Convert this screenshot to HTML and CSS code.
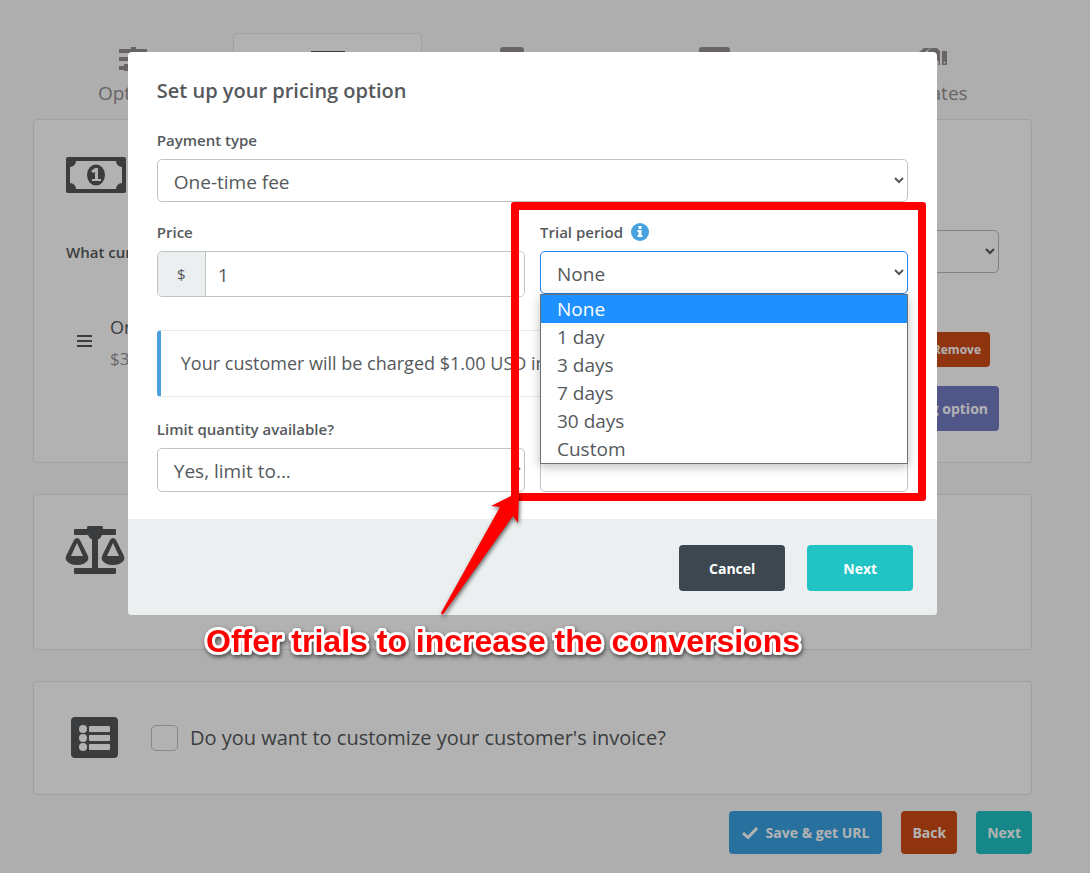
FILE: index.html
```html
<!DOCTYPE html>
<html lang="en">
<head>
  <meta charset="UTF-8" />
  <title>Pricing</title>
  <link rel="stylesheet" href="styles.css">
</head>
<body>
  <div class="page">
    <nav class="tabs">
      <a class="tab" href="#options">
        <svg width="28" height="24" viewBox="0 0 28 24"><path d="M0 2h12V0h5v2h11v4H17v2h-5V6H0zM0 10h17V8h5v2h6v4h-6v2h-5v-2H0zM0 19h5v-2h5v2h18v4H10v1H5v-1H0z" /></svg>
        <span>Options</span>
      </a>
      <a class="tab active" href="#pricing">
        <svg width="34" height="24" viewBox="0 0 34 24"><path d="M0 4h34v17H0z" /></svg>
        <span>Pricing</span>
      </a>
      <a class="tab" href="#fields">
        <svg width="24" height="24" viewBox="0 0 24 24"><rect width="24" height="24" rx="3" /></svg>
        <span>Fields</span>
      </a>
      <a class="tab" href="#emails">
        <svg width="31" height="24" viewBox="0 0 31 24"><rect width="31" height="24" rx="3" /></svg>
        <span>Messages</span>
      </a>
      <a class="tab" href="#affiliates">
        <svg width="34" height="24" viewBox="0 0 34 24"><path d="M0 5h5v13H0zM6 5l5-4h6l-5 4v4c2 2 5 1 6-2l6 8v2c-3 3-7 4-10 2l-8-4zM16 2l3-1h5l3 3v14h-2l1-3-7-8-3 2-2-2z" /><path d="M29 4h5v14h-5zm2.500 10.500a1 1 0 1 0 .1 2 1 1 0 0 0-.1-2z" fill-rule="evenodd" /></svg>
        <span>Affiliates</span>
      </a>
    </nav>

    <section class="card pricing-card">
      <svg class="card-icon" width="60" height="36" viewBox="0 0 60 36">
        <path fill-rule="evenodd" d="M2 0h56a2 2 0 0 1 2 2v32a2 2 0 0 1-2 2H2a2 2 0 0 1-2-2V2a2 2 0 0 1 2-2zM10 4a6 6 0 0 1-6 6v16a6 6 0 0 1 6 6h40a6 6 0 0 1 6-6V10a6 6 0 0 1-6-6z" />
        <ellipse cx="30" cy="18" rx="9" ry="10.500" />
        <path class="cut" d="M29 11h3v11h3v2h-9v-2h3v-7l-2 1-2-2z" />
      </svg>
      <div class="currency-row">
        <label for="currency">What currency do you want to use?</label>
        <select id="currency"><option>US Dollar</option></select>
      </div>
      <div class="option-row">
        <svg width="15" height="13" viewBox="0 0 15 13"><path d="M0 0h15v2H0zM0 5h15v2H0zM0 10h15v2H0z" /></svg>
        <div class="option-text">
          <div class="option-name">One-time fee</div>
          <div class="option-price">$3.00</div>
        </div>
        <button class="btn btn-red btn-small">Remove</button>
      </div>
      <button class="btn btn-purple">Add pricing option</button>
    </section>

    <section class="card terms-card">
      <svg class="card-icon" width="60" height="48" viewBox="0 0 60 48">
        <path d="M10 3h12a7 7 0 0 1 16 0h12a1 1 0 0 1 1 1v4a1 1 0 0 1-1 1H37q-1 3-4 4.500V42h17a1 1 0 0 1 1 1v4a1 1 0 0 1-1 1H10a1 1 0 0 1-1-1v-4a1 1 0 0 1 1-1h17V13.500Q24 12 23 9H10a1 1 0 0 1-1-1V4a1 1 0 0 1 1-1z" />
        <path fill-rule="evenodd" d="M9 14q3-4 6 0l7.500 15q1.500 3 .5 5-3 5-11 5T1 34q-1-2 .5-5zM12 17L6 30h12zM45 14q3-4 6 0l7.500 15q1.500 3 .5 5-3 5-11 5t-11-5q-1-2 .5-5zM48 17l-6 13h12z" />
      </svg>
    </section>

    <section class="card invoice-card">
      <svg class="card-icon" width="60" height="42" viewBox="0 0 60 42">
        <rect x="6" width="47" height="41" rx="4" />
        <g class="cut">
          <circle cx="18" cy="12" r="4" /><circle cx="18" cy="21" r="4" /><circle cx="18" cy="30" r="4" />
          <rect x="24" y="9" width="21" height="6" rx="1" /><rect x="24" y="18" width="21" height="6" rx="1" /><rect x="24" y="27" width="21" height="6" rx="1" />
        </g>
      </svg>
      <label class="invoice-check"><input type="checkbox" /> Do you want to customize your customer's invoice?</label>
    </section>

    <div class="page-actions">
      <button class="btn btn-blue">
        <svg width="16" height="12" viewBox="0 0 16 12"><path d="M1 6l5 4.500L15 1" fill="none" stroke="currentColor" stroke-width="3" /></svg>
        Save &amp; get URL
      </button>
      <button class="btn btn-red">Back</button>
      <button class="btn btn-teal">Next</button>
    </div>
  </div>

  <div class="overlay">
    <div class="modal" role="dialog" aria-labelledby="modal-title">
      <form class="modal-body">
        <h2 id="modal-title">Set up your pricing option</h2>
        <div class="field">
          <label for="type">Payment type</label>
          <select id="type"><option>One-time fee</option></select>
        </div>
        <div class="field-row">
          <div class="field">
            <label for="price">Price</label>
            <div class="input-group">
              <span class="addon">$</span>
              <input id="price" type="text" value="1" />
            </div>
          </div>
          <div class="field trial-field">
            <label for="trial">Trial period
              <svg width="18" height="18" viewBox="0 0 18 18"><circle cx="9" cy="9" r="9" fill="#46a1e0" /><path fill="#fff" d="M7.500 3h3v3h-3zM6.500 7h4v5h1v2h-5v-2h1V9h-1z" /></svg>
            </label>
            <div class="trial-select">
              <select id="trial" class="focused"><option>None</option></select>
              <ul class="trial-list">
                <li class="selected">None</li>
                <li>1 day</li>
                <li>3 days</li>
                <li>7 days</li>
                <li>30 days</li>
                <li>Custom</li>
              </ul>
            </div>
            <div class="highlight"></div>
          </div>
        </div>
        <p class="message">Your customer will be charged $1.00 USD immediately.</p>
        <div class="field-row limit-row">
          <div class="field">
            <label for="limit">Limit quantity available?</label>
            <select id="limit"><option>Yes, limit to...</option></select>
          </div>
          <div class="field">
            <input type="text" aria-label="Quantity" />
          </div>
        </div>
      </form>
      <div class="modal-footer">
        <button class="btn btn-dark">Cancel</button>
        <button class="btn btn-teal">Next</button>
      </div>
      <svg class="callout" width="640" height="180" viewBox="0 0 640 180">
        <path class="arrow" d="M329 4L301 18l9 1L251 125q1 3 3 0L323 28l5 7z" />
        <text x="16" y="164">Offer trials to increase the conversions</text>
      </svg>
    </div>
  </div>
</body>
</html>
```

FILE: styles.css
```css
* {
  box-sizing: border-box;
}
body {
  margin: 0;
  background: #f9f9f9;
  color: #55595c;
  font-family: "Open Sans", "Noto Sans", sans-serif;
  font-size: 18px;
}
button, input, select {
  font-family: inherit;
  color: inherit;
}
label {
  display: block;
  font-size: 15px;
  font-weight: 600;
  line-height: 22px;
}
select, input {
  display: block;
  width: 100%;
  height: 43px;
  padding: 2px 3px 0 12px;
  border: 1px solid #c1c4c5;
  border-radius: 5px;
  background: #fff;
  font-size: 19px;
}

/* page */
.page {
  padding: 33px 58px 19px 33px;
}
.tabs {
  display: grid;
  grid-template-columns: 200fr 189fr 180fr 225fr 205fr;
}
.tab {
  display: flex;
  flex-direction: column;
  align-items: center;
  gap: 9px;
  height: 86px;
  padding-top: 13px;
  border: 1px solid transparent;
  color: #979090;
  font-size: 19px;
  line-height: 26px;
  text-decoration: none;
}
.tab svg {
  fill: currentColor;
}
.tab.active {
  border-color: #e6e6e6;
  border-bottom: 0;
  border-radius: 5px 5px 0 0;
  background: #fff;
  color: #556;
}
.card {
  margin-bottom: 31px;
  padding: 31px;
  border: 1px solid #e6e6e6;
  border-radius: 4px;
  background: #fff;
}
.card-icon {
  display: block;
  flex: none;
  fill: #55565a;
}
.card-icon .cut {
  fill: #fff;
}
.pricing-card {
  display: flex;
  flex-direction: column;
  padding: 37px 32px 31px;
}
.currency-row {
  display: flex;
  align-items: center;
  justify-content: space-between;
  margin-top: 37px;
}
.currency-row select {
  width: 50%;
  border-color: #bbb;
}
.option-row {
  display: flex;
  align-items: flex-start;
  gap: 18px;
  margin: 38px 9px 0 11px;
}
.option-row svg {
  margin-top: 24px;
  fill: #55565a;
}
.option-row .btn {
  margin-top: 21px;
}
.option-text {
  flex: 1;
}
.option-name {
  line-height: 32px;
}
.option-price {
  color: #979797;
  font-size: 17px;
  line-height: 32px;
}
.pricing-card .btn-purple {
  align-self: flex-end;
  margin-top: 11px;
}
.terms-card {
  height: 156px;
}
.invoice-card {
  display: flex;
  align-items: center;
  gap: 26px;
  height: 114px;
  margin-bottom: 16px;
}
.invoice-check {
  display: flex;
  align-items: center;
  gap: 12px;
  font-size: 20px;
  font-weight: 400;
}
.invoice-check input {
  appearance: none;
  width: 27px;
  height: 26px;
  margin: 0;
  padding: 0;
}
.page-actions {
  display: flex;
  justify-content: flex-end;
  gap: 19px;
}

/* buttons */
.btn {
  display: flex;
  align-items: center;
  justify-content: center;
  gap: 8px;
  height: 43px;
  padding: 0 11px;
  border: 0;
  border-radius: 4px;
  color: #fff;
  font-size: 14px;
  font-weight: 700;
}
.btn-small {
  height: 35px;
  padding: 0 9px;
  font-size: 12px;
}
.btn-red {
  background: #cf4916;
}
.btn-teal {
  background: #22c3c5;
}
.btn-blue {
  padding: 0 13px;
  background: #3aa1e3;
}
.btn-purple {
  height: 45px;
  background: #747cc5;
}
.btn-dark {
  background: #3d474f;
}

/* modal */
.overlay {
  position: fixed;
  inset: 0;
  display: flex;
  align-items: flex-start;
  justify-content: center;
  padding: 52px 25px 0 0;
  background: rgba(0, 0, 0, 0.3);
}
.modal {
  position: relative;
  width: 76%;
  border-radius: 4px;
  background: #fff;
}
.modal-body {
  padding: 24px 29px 27px;
}
.modal h2 {
  margin: 0 0 23px;
  font-size: 20px;
  font-weight: 600;
  line-height: 30px;
}
.field {
  display: flex;
  flex: 1;
  flex-direction: column;
  gap: 8px;
}
.field label {
  display: flex;
  align-items: center;
  gap: 8px;
}
.field-row {
  display: flex;
  gap: 15px;
}
.field + .field-row {
  margin-top: 19px;
}
.limit-row {
  align-items: flex-end;
}
.limit-row select, .limit-row input {
  height: 44px;
}
.input-group {
  display: flex;
  height: 46px;
  border: 1px solid #c1c4c5;
  border-radius: 5px;
  overflow: hidden;
}
.input-group input {
  height: 100%;
  border: 0;
  border-radius: 0;
}
.addon {
  flex: none;
  width: 48px;
  border-right: 1px solid #c1c4c5;
  background: #ebeff0;
  font-size: 15px;
  line-height: 44px;
  text-align: center;
}
.message {
  margin: 33px 0 21px;
  padding: 0 20px;
  border: 1px solid #e8e8e8;
  border-left: 4px solid #4a9fdf;
  border-radius: 4px;
  line-height: 65px;
}
.trial-field, .trial-select {
  position: relative;
}
.focused {
  border-color: #2080f0;
}
.trial-list {
  position: absolute;
  z-index: 1;
  top: 43px;
  left: 0;
  right: 0;
  margin: 0;
  padding: 0;
  border: 1px solid #6d7175;
  background: #fff;
  box-shadow: 0 3px 10px rgba(0, 0, 0, 0.25);
  font-size: 19px;
  list-style: none;
}
.trial-list li {
  padding-left: 16px;
  line-height: 28px;
}
.trial-list .selected {
  background: #1e90ff;
  color: #fff;
}
.modal-footer {
  display: flex;
  justify-content: flex-end;
  gap: 22px;
  padding: 26px 24px 24px;
  border-radius: 0 0 4px 4px;
  background: #ebeff0;
}
.modal-footer .btn {
  width: 106px;
  height: 46px;
}

/* callout over the modal */
.highlight {
  position: absolute;
  top: -19px;
  left: -29px;
  right: -18px;
  height: 299px;
  border: 8px solid #f00;
  border-radius: 3px;
}
.callout {
  position: absolute;
  top: 436px;
  left: 62px;
  overflow: visible;
  filter: drop-shadow(1px 2px 2px rgba(0, 0, 0, 0.6));
}
.arrow {
  fill: #f00;
}
.callout text {
  fill: #f00;
  stroke: #fff;
  stroke-width: 6px;
  stroke-linejoin: round;
  paint-order: stroke;
  font: bold 32px "Liberation Sans", Arial, sans-serif;
}
```
